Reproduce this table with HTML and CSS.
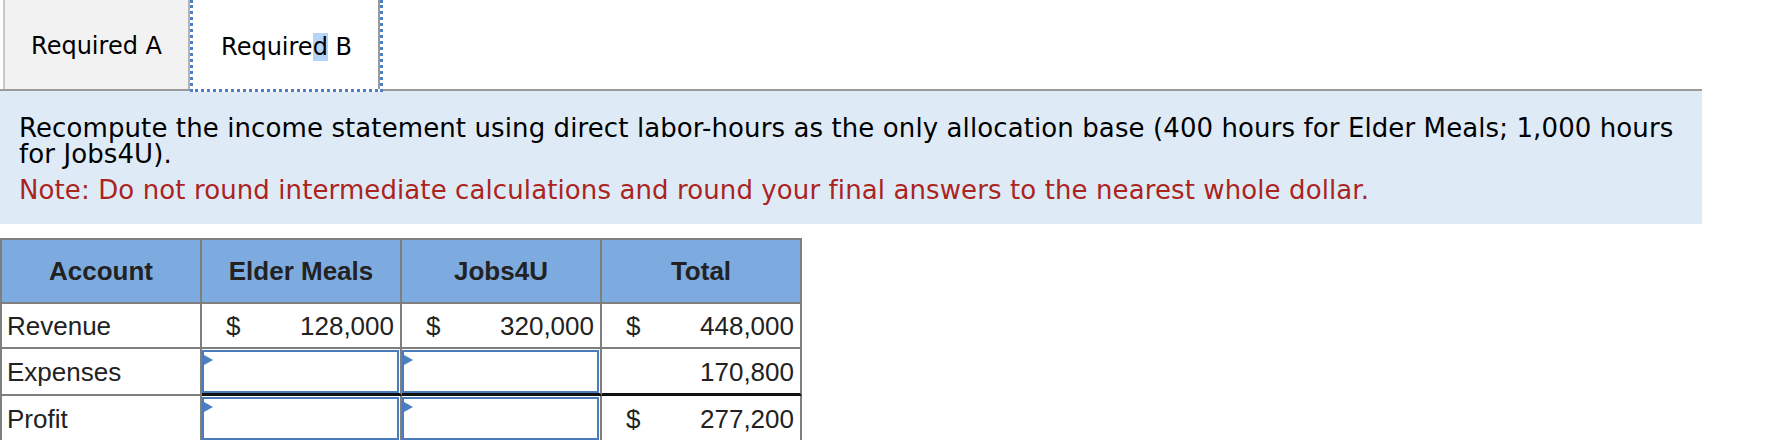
FILE: index.html
```html
<!DOCTYPE html>
<html>
<head>
<meta charset="utf-8">
<title>Required B</title>
<link rel="stylesheet" href="styles.css">
</head>
<body>
<div class="tabs">
  <div class="tab tab-a"><span class="label">Required A</span></div>
  <div class="tab tab-b"><span class="label">Require<span class="sel">d</span> B</span></div>
</div>
<div class="prompt">
  <p class="q">Recompute the income statement using direct labor-hours as the only allocation base (400 hours for Elder Meals; 1,000 hours for Jobs4U).</p>
  <p class="note">Note: Do not round intermediate calculations and round your final answers to the nearest whole dollar.</p>
</div>
<table class="stmt">
  <thead>
    <tr>
      <th>Account</th>
      <th>Elder Meals</th>
      <th>Jobs4U</th>
      <th>Total</th>
    </tr>
  </thead>
  <tbody>
    <tr class="r1">
      <td class="acct">Revenue</td>
      <td><div class="money"><span>$</span><span>128,000</span></div></td>
      <td><div class="money"><span>$</span><span>320,000</span></div></td>
      <td><div class="money"><span>$</span><span>448,000</span></div></td>
    </tr>
    <tr class="r2">
      <td class="acct">Expenses</td>
      <td class="in"><div class="input"></div></td>
      <td class="in"><div class="input"></div></td>
      <td class="tot"><div class="money"><span></span><span>170,800</span></div></td>
    </tr>
    <tr class="r3">
      <td class="acct">Profit</td>
      <td class="in"><div class="input"></div></td>
      <td class="in"><div class="input"></div></td>
      <td class="tot"><div class="money"><span>$</span><span>277,200</span></div></td>
    </tr>
  </tbody>
</table>
</body>
</html>
```
FILE: styles.css
```css
html, body {
  margin: 0;
  padding: 0;
  background: #ffffff;
}

body {
  font-family: "DejaVu Sans", Verdana, sans-serif;
  color: #000;
}

.tabs {
  display: flex;
  box-sizing: border-box;
  width: 1702px;
  height: 91px;
  padding-left: 3px;
  border-bottom: 2px solid #9a9a9a;
}

.tab {
  box-sizing: border-box;
  display: flex;
  align-items: center;
  justify-content: center;
  font-size: 24px;
  padding-top: 2px;
}

.tab-a {
  width: 187px;
  height: 89px;
  background: #f2f2f2;
  border-left: 2px solid #c9c9c9;
  border-right: 2px solid #b3b3b3;
}

.tab-b {
  width: 193px;
  height: 92px;
  background: #ffffff;
  border-left: 3px dotted #4d7fc4;
  border-right: 3px dotted #4d7fc4;
  border-bottom: 3px dotted #4d7fc4;
  box-shadow: inset -2px 0 0 #9a9a9a;
  padding-top: 5px;
}

.label {
  white-space: nowrap;
}

.sel {
  background: #b6d4f8;
}

.prompt {
  box-sizing: border-box;
  width: 1702px;
  background: #deebf7;
  padding: 24px 10px 21px 19px;
  font-size: 26px;
  line-height: 26px;
  letter-spacing: 0.1px;
}

.prompt p {
  margin: 0;
}

.prompt .note {
  margin-top: 10px;
  color: #ab241d;
}

.stmt {
  margin-top: 14px;
  border-collapse: separate;
  border-spacing: 0;
  border-top: 2px solid #7f7f7f;
  border-left: 2px solid #7f7f7f;
  font-family: "Liberation Sans", Arial, sans-serif;
  font-size: 26px;
  color: #222;
}

.stmt th,
.stmt td {
  box-sizing: border-box;
  border-right: 2px solid #7f7f7f;
  border-bottom: 2px solid #7f7f7f;
  padding: 0;
  vertical-align: middle;
}

.stmt th {
  width: 200px;
  height: 64px;
  background: #7eabdf;
  font-weight: bold;
  text-align: center;
}

.stmt .r1 td {
  height: 45px;
  padding-top: 2px;
}

.stmt .r2 td {
  height: 46px;
}

.stmt .r2 .acct,
.stmt .r2 .tot,
.stmt .r3 .acct,
.stmt .r3 .tot {
  padding-top: 2px;
}

.stmt .r3 td {
  height: 44px;
}

.stmt .acct {
  padding-left: 5px;
  text-align: left;
}

.money {
  display: flex;
  justify-content: space-between;
  padding: 0 6px 0 24px;
}

.stmt .r2 .in,
.stmt .r2 .tot,
.stmt .r3 .in,
.stmt .r3 .tot {
  border-bottom: 3px solid #111;
}

.stmt .in {
  padding: 1px 1px 0 0;
}

.input {
  position: relative;
  box-sizing: border-box;
  height: 43px;
  border: 2px solid #4a7bbd;
  background: #fff;
}

.input::before {
  content: "";
  position: absolute;
  left: 0;
  top: 3px;
  border-top: 5px solid transparent;
  border-bottom: 5px solid transparent;
  border-left: 9px solid #4a7fc5;
}
```
